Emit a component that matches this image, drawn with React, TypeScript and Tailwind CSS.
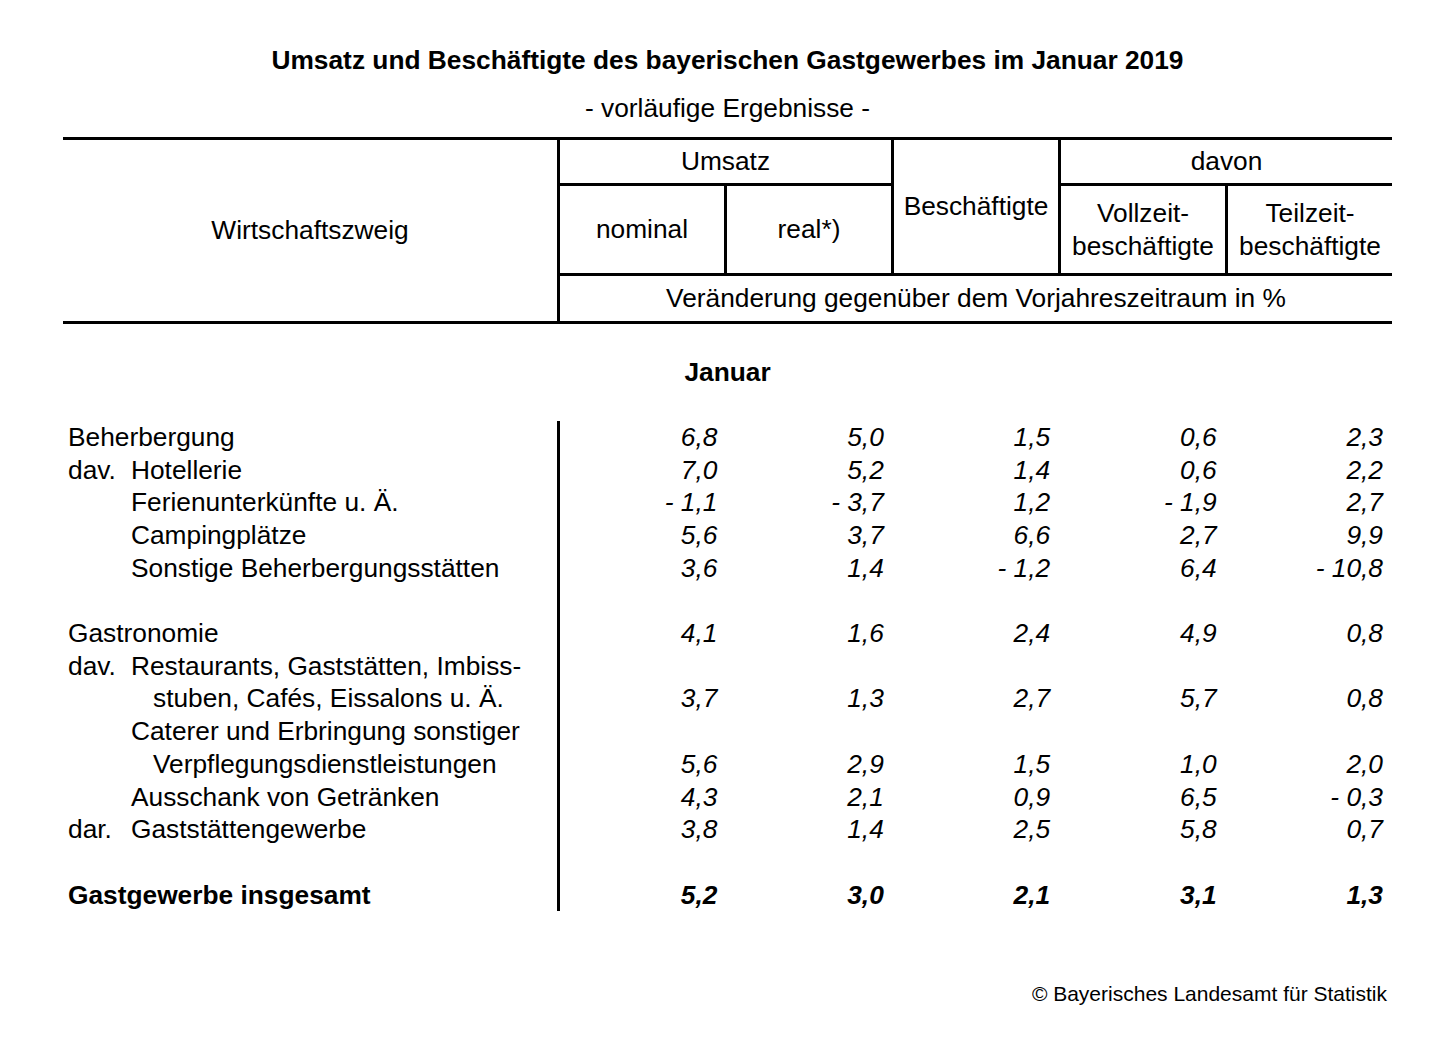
import React from "react";

type Row = {
  prefix?: string;
  label?: string;
  indent?: "none" | "sub" | "cont";
  values?: string[];
  bold?: boolean;
};

const rows: Row[] = [
  { label: "Beherbergung", values: ["6,8", "5,0", "1,5", "0,6", "2,3"] },
  { prefix: "dav.", label: "Hotellerie", indent: "sub", values: ["7,0", "5,2", "1,4", "0,6", "2,2"] },
  { label: "Ferienunterkünfte u. Ä.", indent: "sub", values: ["- 1,1", "- 3,7", "1,2", "- 1,9", "2,7"] },
  { label: "Campingplätze", indent: "sub", values: ["5,6", "3,7", "6,6", "2,7", "9,9"] },
  { label: "Sonstige Beherbergungsstätten", indent: "sub", values: ["3,6", "1,4", "- 1,2", "6,4", "- 10,8"] },
  {},
  { label: "Gastronomie", values: ["4,1", "1,6", "2,4", "4,9", "0,8"] },
  { prefix: "dav.", label: "Restaurants, Gaststätten, Imbiss-", indent: "sub" },
  { label: "stuben, Cafés, Eissalons u. Ä.", indent: "cont", values: ["3,7", "1,3", "2,7", "5,7", "0,8"] },
  { label: "Caterer und Erbringung sonstiger", indent: "sub" },
  { label: "Verpflegungsdienstleistungen", indent: "cont", values: ["5,6", "2,9", "1,5", "1,0", "2,0"] },
  { label: "Ausschank von Getränken", indent: "sub", values: ["4,3", "2,1", "0,9", "6,5", "- 0,3"] },
  { prefix: "dar.", label: "Gaststättengewerbe", indent: "sub", values: ["3,8", "1,4", "2,5", "5,8", "0,7"] },
  {},
  { label: "Gastgewerbe insgesamt", bold: true, values: ["5,2", "3,0", "2,1", "3,1", "1,3"] },
];

function BodyRow({ row }: { row: Row }) {
  return (
    <div className={`flex h-[32.7px] leading-[32.7px] ${row.bold ? "font-bold" : ""}`}>
      <div className="w-[497px] shrink-0 border-r-[3px] border-black pl-[5px] flex whitespace-nowrap">
        {row.indent === "sub" || row.indent === "cont" ? (
          <>
            <span className={row.indent === "cont" ? "w-[85px] shrink-0" : "w-[63px] shrink-0"}>{row.prefix}</span>
            <span>{row.label}</span>
          </>
        ) : (
          <span>{row.label}</span>
        )}
      </div>
      {(row.values ?? ["", "", "", "", ""]).map((v, i) => (
        <div key={i} className="w-[166.4px] shrink-0 text-right pr-[9px] italic whitespace-nowrap">
          {v}
        </div>
      ))}
    </div>
  );
}

export default function App() {
  return (
    <div className="min-h-[1055px] w-[1440px] bg-white text-black font-['Liberation_Sans',Arial,sans-serif] text-[26.3px]">
      <div className="ml-[63px] w-[1329px] pt-[44px]">
        <h1 className="text-center font-bold leading-[32px]">
          Umsatz und Beschäftigte des bayerischen Gastgewerbes im Januar 2019
        </h1>
        <p className="mt-[16px] text-center leading-[32px]">- vorläufige Ergebnisse -</p>

        <div className="mt-[13px] grid grid-cols-[494px_164px_164px_164px_164px_164px] grid-rows-[43px_87px_45px] gap-[3px] bg-black py-[3px] leading-[32.7px]">
          <div className="row-span-3 bg-white flex items-center justify-center">Wirtschaftszweig</div>
          <div className="col-span-2 bg-white flex items-center justify-center">Umsatz</div>
          <div className="row-span-2 bg-white flex items-center justify-center">Beschäftigte</div>
          <div className="col-span-2 bg-white flex items-center justify-center">davon</div>
          <div className="bg-white flex items-center justify-center">nominal</div>
          <div className="bg-white flex items-center justify-center">real*)</div>
          <div className="bg-white flex flex-col items-center justify-center">
            <span>Vollzeit-</span>
            <span>beschäftigte</span>
          </div>
          <div className="bg-white flex flex-col items-center justify-center">
            <span>Teilzeit-</span>
            <span>beschäftigte</span>
          </div>
          <div className="col-span-5 bg-white flex items-center justify-center">
            Veränderung gegenüber dem Vorjahreszeitraum in %
          </div>
        </div>

        <div className="mt-[32px] h-[32.7px] leading-[32.7px] text-center font-bold">Januar</div>

        <div className="mt-[32.3px]">
          {rows.map((r, i) => (
            <BodyRow key={i} row={r} />
          ))}
        </div>

        <p className="mt-[71px] text-right pr-[5px] text-[21px] leading-[24px]">
          © Bayerisches Landesamt für Statistik
        </p>
      </div>
    </div>
  );
}
